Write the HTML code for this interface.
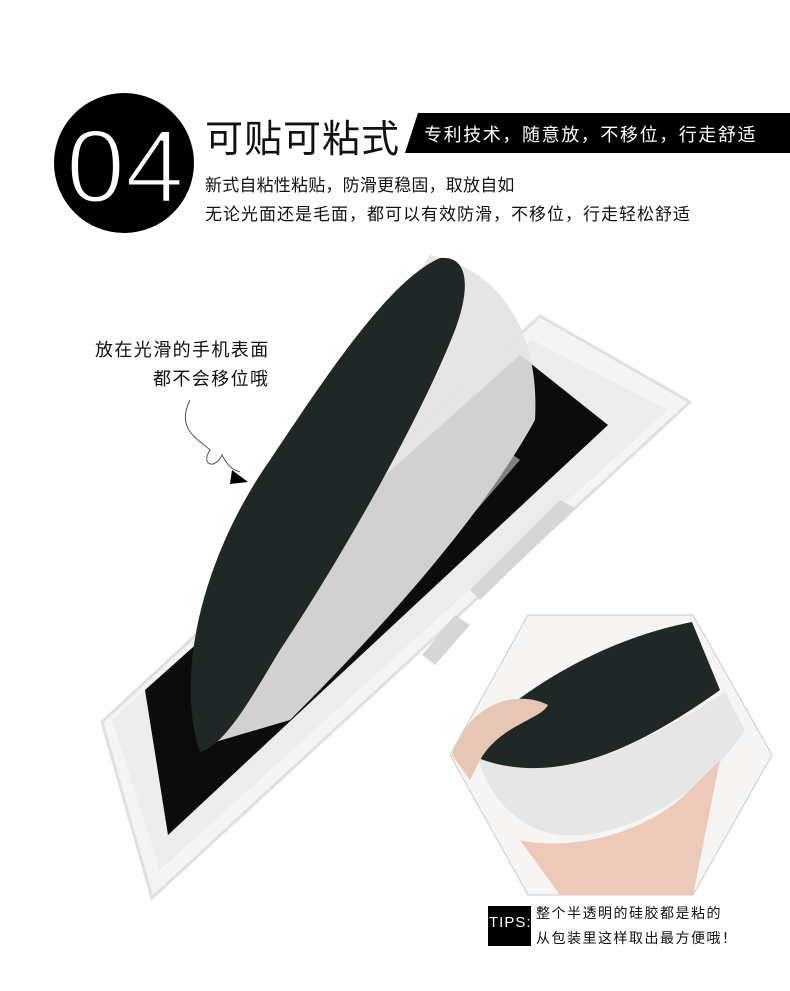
<!DOCTYPE html>
<html><head><meta charset="utf-8"><style>
html,body{margin:0;padding:0;background:#fff;}
body{width:790px;height:991px;position:relative;overflow:hidden;font-family:"Liberation Sans","Noto Sans CJK SC",sans-serif;}
.t{position:absolute;white-space:nowrap;color:#111;}
</style></head><body>
<svg width="790" height="991" style="position:absolute;left:0;top:0">
<circle cx="124" cy="163" r="70" fill="#000"/>
<text x="66" y="202" font-family="Liberation Sans,sans-serif" font-size="104" fill="#fff" font-weight="100" textLength="118" lengthAdjust="spacingAndGlyphs" stroke="#000" stroke-width="3">04</text>
<polygon points="418,113 790,113 790,153 405,153" fill="#000"/>
<!-- phone -->
<polygon points="540,316 690,402 152,898 102,722" fill="#f4f4f4" stroke="#e0e0e0" stroke-width="3"/>
<polygon points="532,340 668,410 160,870 112,720" fill="#ececec"/>
<polygon points="520,355 608,425 168,835 145,690" fill="#0c0c0c"/>
<polygon points="560,500 575,508 480,600 470,590" fill="#d6d6d6"/>
<polygon points="455,615 470,625 435,665 422,655" fill="#d6d6d6"/>
<!-- insole gel -->
<path d="M205,745 C260,600 330,420 430,255 C500,270 540,330 535,420 C480,520 380,630 290,720 Z" fill="#e3e3e3" opacity="0.92"/>
<path d="M300,650 L480,430 L520,460 L320,690 Z" fill="#cfcfcf" opacity="0.6"/>
<!-- insole dark -->
<path d="M200,752 C175,680 200,560 270,460 C330,370 390,280 440,258 C470,255 470,290 455,330 C420,420 340,560 280,650 C250,700 225,745 200,752 Z" fill="#1f2827"/>
<!-- arrow -->
<path d="M190,400 C175,430 200,440 210,450 C200,465 215,470 222,455 C230,470 235,470 240,472" fill="none" stroke="#555" stroke-width="1"/>
<polygon points="232,470 248,482 230,484" fill="#000"/>
<!-- hexagon -->
<polygon points="528,615 693,615 772,755 693,895 528,895 450,755" fill="#f7f5f3" stroke="#ccc" stroke-width="1"/>
<path d="M465,745 C520,690 600,640 692,622 L720,690 C650,740 560,790 480,760 Z" fill="#1f2827"/>
<path d="M478,758 C560,790 650,740 725,692 L745,730 C700,800 620,840 560,835 C520,830 490,800 478,758 Z" fill="#e6e6e6"/>
<path d="M452,755 C470,700 520,690 548,705 C540,720 500,725 480,760 L470,780 Z" fill="#e8c6b6"/>
<path d="M520,840 C560,850 640,840 690,790 L720,760 L693,895 L560,895 Z" fill="#ecc9b8"/>
<rect x="488" y="906" width="43" height="40" fill="#000"/>
</svg>
<div class="t" style="left:205px;top:108px;font-size:38px;letter-spacing:1px;">可贴可粘式</div>
<div class="t" style="left:424px;top:121px;font-size:18px;color:#fff;letter-spacing:1.6px;">专利技术，随意放，不移位，行走舒适</div>
<div class="t" style="left:205px;top:171px;font-size:17px;letter-spacing:0.2px;">新式自粘性粘贴，防滑更稳固，取放自如</div>
<div class="t" style="left:205px;top:200px;font-size:17px;letter-spacing:1px;">无论光面还是毛面，都可以有效防滑，不移位，行走轻松舒适</div>
<div class="t" style="left:95px;top:336px;font-size:18px;letter-spacing:1.4px;">放在光滑的手机表面</div>
<div class="t" style="left:153px;top:365px;font-size:18px;letter-spacing:1.4px;">都不会移位哦</div>
<div class="t" style="left:489px;top:914px;font-size:15px;color:#fff;letter-spacing:1px;">TIPS:</div>
<div class="t" style="left:536px;top:903px;font-size:14px;letter-spacing:1.5px;">整个半透明的硅胶都是粘的</div>
<div class="t" style="left:536px;top:928px;font-size:14px;letter-spacing:1.5px;">从包装里这样取出最方便哦！</div>
</body></html>
